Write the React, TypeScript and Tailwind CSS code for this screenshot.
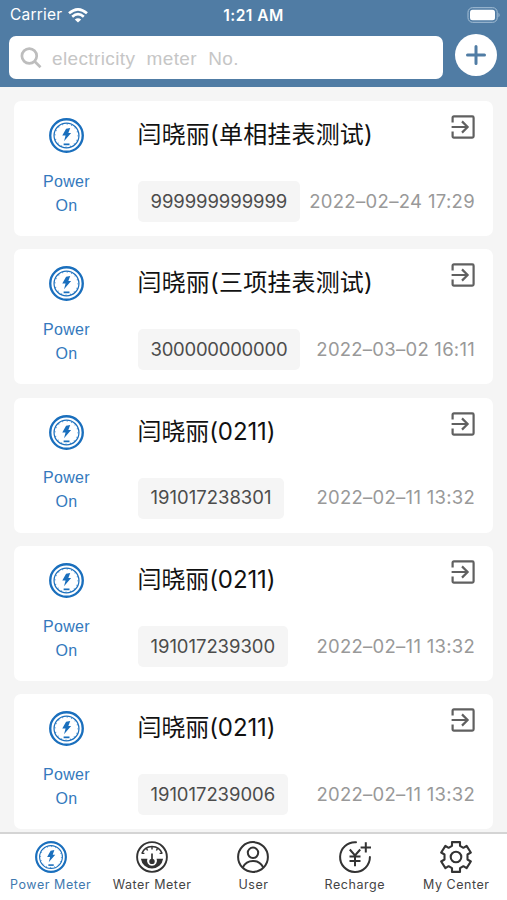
import React from "react";

type Meter = { name: string; no: string; time: string; nameCls: string; noCls: string; timeCls: string };

const meters: Meter[] = [
  { name: "闫晓丽(单相挂表测试)", no: "999999999999", time: "2022–02–24 17:29", nameCls: "tracking-[0.18px]", noCls: "tracking-[-0.08px]", timeCls: "tracking-[0.33px]" },
  { name: "闫晓丽(三项挂表测试)", no: "300000000000", time: "2022–03–02 16:11", nameCls: "tracking-[0.18px]", noCls: "tracking-[-0.25px]", timeCls: "tracking-[0.25px]" },
  { name: "闫晓丽(0211)", no: "191017238301", time: "2022–02–11 13:32", nameCls: "tracking-[-0.1px]", noCls: "", timeCls: "tracking-[0.27px]" },
  { name: "闫晓丽(0211)", no: "191017239300", time: "2022–02–11 13:32", nameCls: "tracking-[-0.1px]", noCls: "tracking-[-0.05px]", timeCls: "tracking-[0.27px]" },
  { name: "闫晓丽(0211)", no: "191017239006", time: "2022–02–11 13:32", nameCls: "tracking-[-0.1px]", noCls: "tracking-[-0.05px]", timeCls: "tracking-[0.27px]" },
];

function PowerIcon({ className }: { className: string }) {
  return (
    <svg viewBox="0 0 34 34" className={className} fill="none" stroke="#1a6fbd">
      <circle cx="17" cy="17" r="15.8" strokeWidth="2.3" />
      <circle cx="17" cy="17" r="12.1" strokeWidth="1.2" />
      <circle cx="17" cy="17" r="11.1" strokeWidth="1" strokeDasharray="0.8 3.55" />
      <path d="M16.6 10.4 20.6 9.6 18.8 14.6h2.7l-6.9 8 1.5-5.5h-3.2z" fill="#1a6fbd" stroke="none" />
      <path d="M14.2 25.6h5.7" strokeWidth="1.7" />
    </svg>
  );
}

function WaterIcon() {
  return (
    <svg viewBox="0 0 32 32" className="h-8 w-8" fill="none" stroke="#333">
      <circle cx="16" cy="16" r="14.9" strokeWidth="1.9" />
      <path d="M5.9 12.6A10.7 10.7 0 0 1 26.1 12.6" strokeWidth="1.6" />
      <path d="M16 5.5v3M10.4 7.3l1.2 2.2M21.6 7.3l-1.2 2.2M5.8 12.4h2.6M26.2 12.4h-2.6" strokeWidth="1.4" />
      <path d="M4.9 17.8h6.5a5 5 0 1 0 9.2 0h6.5A11.2 11.2 0 0 1 4.9 17.8z" fill="#333" stroke="none" />
      <path d="M16 12.6v7" strokeWidth="1.7" />
      <circle cx="16" cy="20.4" r="2.7" fill="#333" stroke="none" />
    </svg>
  );
}

function UserIcon() {
  return (
    <svg viewBox="0 0 32 32" className="h-8 w-8" fill="none" stroke="#333" strokeWidth="2">
      <circle cx="16" cy="16" r="14.9" />
      <circle cx="16" cy="11.8" r="5.2" />
      <path d="M5.8 26.4C8 22 11.5 20 16 20s8 2 10.2 6.4" />
    </svg>
  );
}

function RechargeIcon() {
  return (
    <svg viewBox="0 0 32 32" className="h-8 w-8 overflow-visible" fill="none" stroke="#333" strokeWidth="2">
      <path d="M17 1.2A14.9 14.9 0 1 0 30.9 16" strokeLinecap="round" />
      <path d="M26.8 1.2v10.4M21.6 6.4H32" />
      <path d="m10.8 8.5 5.2 6 5.2-6M16 14.5v10.8M10.5 15.5h11M10.5 20h11" />
    </svg>
  );
}

function GearIcon() {
  return (
    <svg viewBox="0 0 32 32" className="h-8 w-8" fill="none" stroke="#333" strokeWidth="2.1" strokeLinejoin="round">
      <path d="M12 1.1h8v3.7l3.4 2 3.2-1.9 4.2 6.6-3.3 2v5l3.3 2-4.2 6.6-3.2-1.9-3.4 2v3.7h-8v-3.7l-3.4-2-3.2 1.9-4.2-6.6 3.3-2v-5l-3.3-2 4.2-6.6 3.2 1.9 3.4-2z" />
      <circle cx="16" cy="16" r="5.3" />
    </svg>
  );
}

function EnterIcon() {
  return (
    <svg viewBox="0 0 24 24" className="h-6 w-6" fill="none" stroke="#606060" strokeWidth="2.2">
      <path d="M1.6 7.5V2.7q0-1.3 1.3-1.3h18.4q1.3 0 1.3 1.3v18.6q0 1.3-1.3 1.3H2.9q-1.3 0-1.3-1.3v-4.8" />
      <path d="M.6 12h15.6M11 6.4l5.6 5.6-5.6 5.6" />
    </svg>
  );
}

function Card({ m }: { m: Meter }) {
  return (
    <div className="flex h-[135px] shrink-0 rounded-[7px] bg-white">
      <div className="flex w-[105px] flex-col items-center pt-[17px]">
        <PowerIcon className="h-[35px] w-[35px]" />
        <div className="mt-[16.6px] w-14 text-center font-['Liberation_Sans',sans-serif] text-[16px] leading-6 tracking-[0.35px] text-[#3479bd]">
          Power On
        </div>
      </div>
      <div className="ml-[18.5px] mr-[18px] flex flex-1 flex-col">
        <div className="flex justify-between pt-[14px]">
          <div className={`mt-px whitespace-nowrap font-[Inter,'Noto_Sans_CJK_SC',sans-serif] text-[24px] leading-[38px] text-[#111] ${m.nameCls}`}>{m.name}</div>
          <EnterIcon />
        </div>
        <div className="mt-[27px] flex items-center justify-between whitespace-nowrap font-[Inter,sans-serif] text-[18.5px]">
          <div className={`flex h-[41px] items-center rounded-[5px] bg-[#f5f5f5] px-[13px] text-[#4c4c4c] ${m.noCls}`}>{m.no}</div>
          <div className={`text-[#999] ${m.timeCls}`}>{m.time}</div>
        </div>
      </div>
    </div>
  );
}

const tabs = [
  { label: "Power Meter", icon: <PowerIcon className="h-8 w-8" />, cls: "text-[#3f79af]" },
  { label: "Water Meter", icon: <WaterIcon />, cls: "text-[#444]" },
  { label: "User", icon: <UserIcon />, cls: "text-[#444]" },
  { label: "Recharge", icon: <RechargeIcon />, cls: "text-[#444]" },
  { label: "My Center", icon: <GearIcon />, cls: "text-[#444]" },
];

export default function App() {
  return (
    <div className="flex h-[900px] w-[507px] flex-col overflow-hidden bg-[#f5f5f5] font-[Inter,sans-serif]">
      <header className="h-[87px] shrink-0 bg-[#507ca4] text-white">
        <div className="grid h-[30px] grid-cols-3 items-center px-[10px]">
          <div className="flex items-center gap-[6px] text-[15.5px] tracking-[0.2px]">
            Carrier
            <svg viewBox="0 0 20 15" className="h-[15px] w-5" fill="none" stroke="#fff" strokeWidth="2.7">
              <path d="M1 5.3Q10-2.5 19 5.3M4.2 8.7q5.8-5 11.6 0" />
              <path d="M6.8 11.5q3.2-2.7 6.4 0L10 14.6z" fill="#fff" stroke="none" />
            </svg>
          </div>
          <div className="pt-px text-center text-[15.5px] font-semibold tracking-[0.5px]">1:21 AM</div>
          <svg viewBox="0 0 33 16" className="mr-[-3px] h-4 w-[33px] justify-self-end">
            <rect x="1" y=".7" width="29.2" height="14.6" rx="4.5" fill="none" stroke="#a5bfd5" />
            <rect x="3" y="2.8" width="25" height="10.4" rx="2.5" fill="#fff" />
            <path d="M31.5 5.5q2.2 2.5 0 5z" fill="#a5bfd5" />
          </svg>
        </div>
        <div className="flex items-start pl-[9px]">
          <div className="mt-[6px] flex h-[43px] w-[434px] items-center rounded-[7px] bg-white pl-[11px]">
            <svg viewBox="0 0 22 22" className="mt-px h-[22px] w-[22px]" fill="none" stroke="#bdbdbd" strokeWidth="2.7">
              <circle cx="9.3" cy="9" r="7.4" />
              <path d="m14.5 14.2 6 6" />
            </svg>
            <span className="ml-[10px] mt-[3px] whitespace-pre font-['Liberation_Sans',sans-serif] text-[19px] tracking-[0.37px] text-[#c6c6c6]">electricity  meter  No.</span>
          </div>
          <div className="ml-3 mt-1 flex h-[42px] w-[42px] items-center justify-center rounded-full bg-white">
            <svg viewBox="0 0 20 20" className="h-5 w-5" stroke="#507ca4" strokeWidth="3" strokeLinecap="round">
              <path d="M10 1.5v17M1.5 10h17" />
            </svg>
          </div>
        </div>
      </header>
      <main className="flex min-h-0 flex-1 flex-col gap-[13.35px] overflow-hidden px-[14px] pt-[14px]">
        {meters.map((m) => (
          <Card key={m.no} m={m} />
        ))}
      </main>
      <nav className="grid h-[68px] shrink-0 grid-cols-5 border-t-2 border-[#d4d4d4] bg-white pt-[7px]">
        {tabs.map((t) => (
          <div key={t.label} className={`flex flex-col items-center text-[12.5px] ${t.cls}`}>
            {t.icon}
            <span className="mt-1 whitespace-nowrap leading-4 tracking-[0.55px]">{t.label}</span>
          </div>
        ))}
      </nav>
    </div>
  );
}
